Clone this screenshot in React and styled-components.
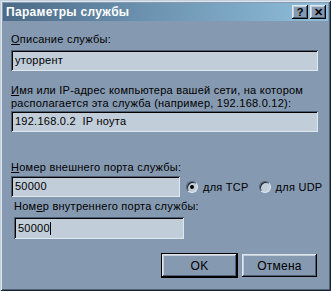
import React from "react";
import styled, { createGlobalStyle, css } from "styled-components";

const FACE = "#8599b1";
const LIGHT = "#c3cfdb";
const HILITE = "#dfe6ee";
const SHADOW = "#4f6075";
const FIELD = "#c1cdd9";

const Global = createGlobalStyle`
  html, body { margin: 0; padding: 0; background: ${FACE}; }
  body { font-family: "Liberation Sans", Arial, sans-serif; font-size: 11px; letter-spacing: 0.25px; color: #000; }
`;

const Window = styled.div`
  box-sizing: border-box;
  width: 331px;
  height: 291px;
  padding: 3px;
  background: ${FACE};
  box-shadow: inset 1px 1px 0 ${LIGHT}, inset -1px -1px 0 #1a2430,
    inset 2px 2px 0 ${HILITE}, inset -2px -2px 0 ${SHADOW};
  display: flex;
  flex-direction: column;
`;

const TitleBar = styled.div`
  height: 18px;
  display: flex;
  align-items: center;
  padding: 0 2px 0 3px;
  background: linear-gradient(to right, #4b6b88 0%, #6c93b0 45%, #8fbedb 100%);
`;

const Title = styled.div`
  flex: 1;
  color: #fff;
  font-weight: bold;
  font-size: 12px;
  letter-spacing: 0.3px;
  line-height: 18px;
`;

const raised = css`
  background: ${FACE};
  box-shadow: inset -1px -1px 0 #000, inset 1px 1px 0 ${HILITE},
    inset -2px -2px 0 ${SHADOW}, inset 2px 2px 0 ${LIGHT};
`;

const CaptionButton = styled.div`
  ${raised};
  box-sizing: border-box;
  width: 16px;
  height: 14px;
  margin-left: 2px;
  display: flex;
  align-items: center;
  justify-content: center;
  font-weight: bold;
  font-size: 11px;
  letter-spacing: 0;
  line-height: 1;
`;

const Body = styled.div`
  flex: 1;
  display: flex;
  flex-direction: column;
  padding: 12px 10px 0 8px;
`;

const Label = styled.div`
  line-height: 13px;
  margin-top: ${(p) => p.$mt || 0}px;
  margin-left: ${(p) => p.$indent || 0}px;
  white-space: nowrap;
`;

const Field = styled.div`
  box-sizing: border-box;
  flex-shrink: 0;
  height: ${(p) => p.$h || 21}px;
  width: ${(p) => (p.$w ? `${p.$w}px` : "auto")};
  margin-top: ${(p) => p.$mt || 0}px;
  margin-left: ${(p) => p.$indent || 0}px;
  background: ${FIELD};
  box-shadow: inset 1px 1px 0 ${SHADOW}, inset -1px -1px 0 ${HILITE},
    inset 2px 2px 0 #000, inset -2px -2px 0 ${LIGHT};
  padding: 0 4px;
  display: flex;
  align-items: center;
  white-space: pre;
  line-height: 13px;
`;

const Caret = styled.span`
  display: inline-block;
  width: 1px;
  height: 13px;
  background: #000;
`;

const PortRow = styled.div`
  display: flex;
  align-items: center;
  margin-top: 2px;
`;

const RadioGroup = styled.label`
  display: flex;
  align-items: center;
  flex-shrink: 0;
  white-space: nowrap;
  margin-left: ${(p) => p.$ml}px;
  gap: 5px;
`;

const RadioCircle = styled.span`
  box-sizing: border-box;
  width: 12px;
  height: 12px;
  border-radius: 50%;
  border: 1px solid;
  border-color: ${SHADOW} ${HILITE} ${HILITE} ${SHADOW};
  background: ${FIELD};
  box-shadow: inset 1px 1px 0 #1a2430, inset -1px -1px 0 ${LIGHT};
  display: flex;
  align-items: center;
  justify-content: center;
  &::after {
    content: "";
    width: 4px;
    height: 4px;
    border-radius: 50%;
    background: ${(p) => (p.$checked ? "#000" : "transparent")};
  }
`;

const Buttons = styled.div`
  display: flex;
  justify-content: flex-end;
  gap: 5px;
  margin-top: 15px;
  padding-right: 1px;
`;

const Button = styled.div`
  ${raised};
  box-sizing: border-box;
  width: 75px;
  height: 23px;
  display: flex;
  align-items: center;
  justify-content: center;
  font-size: 12px;
  ${(p) =>
    p.$default &&
    css`
      outline: 1px solid #000;
    `}
`;

export default function App() {
  return (
    <>
      <Global />
      <Window>
        <TitleBar>
          <Title>Параметры службы</Title>
          <CaptionButton>?</CaptionButton>
          <CaptionButton>✕</CaptionButton>
        </TitleBar>
        <Body>
          <Label>
            <u>О</u>писание службы:
          </Label>
          <Field $mt={4}>уторрент</Field>
          <Label $mt={13}>
            <u>И</u>мя или IP-адрес компьютера вашей сети, на котором
            <br />
            располагается эта служба (например, 192.168.0.12):
          </Label>
          <Field $mt={1}>192.168.0.2  IP ноута</Field>
          <Label $mt={29}>
            <u>Н</u>омер внешнего порта службы:
          </Label>
          <PortRow>
            <Field $w={169}>50000</Field>
            <RadioGroup $ml={6}>
              <RadioCircle $checked />
              для TCP
            </RadioGroup>
            <RadioGroup $ml={10}>
              <RadioCircle />
              для UDP
            </RadioGroup>
          </PortRow>
          <Label $mt={3} $indent={3}>
            Ном<u>е</u>р внутреннего порта службы:
          </Label>
          <Field $mt={4} $indent={3} $w={170} $h={22}>
            50000
            <Caret />
          </Field>
          <Buttons>
            <Button $default>OK</Button>
            <Button>Отмена</Button>
          </Buttons>
        </Body>
      </Window>
    </>
  );
}
